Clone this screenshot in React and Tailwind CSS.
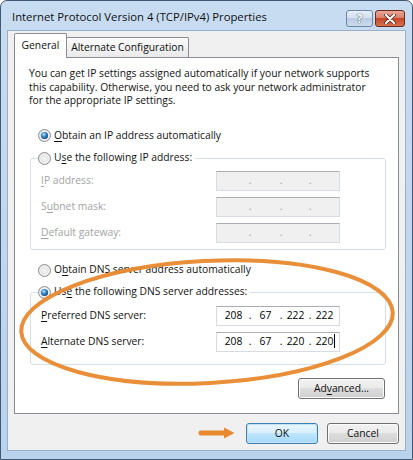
import React from "react";

function Radio({ checked }) {
  return (
    <svg width="13" height="13" viewBox="0 0 13 13" className="shrink-0">
      <defs>
        <radialGradient id="rbg" cx="50%" cy="50%" r="60%">
          <stop offset="0" stopColor="#f4f4f4" />
          <stop offset="0.7" stopColor="#e2e2e2" />
          <stop offset="1" stopColor="#c8c8c8" />
        </radialGradient>
        <radialGradient id="rdot" cx="40%" cy="35%" r="70%">
          <stop offset="0" stopColor="#b9e4fb" />
          <stop offset="0.45" stopColor="#3b8bd0" />
          <stop offset="1" stopColor="#0b3f7a" />
        </radialGradient>
      </defs>
      <circle cx="6.5" cy="6.5" r="6" fill="url(#rbg)" stroke="#8c8e90" />
      <circle cx="6.5" cy="6.5" r="4.6" fill="none" stroke="#ffffff" strokeOpacity="0.6" />
      {checked && <circle cx="6.5" cy="6.5" r="3.6" fill="url(#rdot)" />}
    </svg>
  );
}

function IpField({ values, disabled, cursor }) {
  const widths = ["w-[29px]", "w-[27px]", "w-[25px]", "w-[25px]"];
  return (
    <div
      className={`w-[124px] h-[20px] flex items-center pl-[2px] border border-[#d8dbe2] border-t-[#abadb3] ${
        disabled ? "bg-[#f0f0f0] text-[#a0a0a0]" : "bg-white text-black"
      }`}
    >
      {widths.map((w, i) => (
        <React.Fragment key={i}>
          <div className={`${w} text-center relative`}>
            {values ? values[i] : ""}
            {cursor && i === 3 && (
              <span className="absolute right-[2px] top-[0px] w-[1px] h-[14px] bg-black" />
            )}
          </div>
          {i < 3 && <div className="w-[4px] text-center">.</div>}
        </React.Fragment>
      ))}
    </div>
  );
}

function Btn({ children, w, def }) {
  return (
    <div
      className={`${w} h-[21px] rounded-[3px] border flex items-center justify-center ${
        def
          ? "border-[#3c7fb1] bg-[linear-gradient(to_bottom,#eaf6fd_0%,#d9f0fc_45%,#bee6fd_50%,#a7d9f5_100%)] shadow-[inset_0_0_0_1px_#c2e4f6]"
          : "border-[#707070] bg-[linear-gradient(to_bottom,#f2f2f2_0%,#ebebeb_45%,#dddddd_50%,#cfcfcf_100%)] shadow-[inset_0_0_0_1px_#fcfcfc]"
      }`}
    >
      {children}
    </div>
  );
}

const U = ({ children }) => <span className="underline underline-offset-[2px] decoration-[1px]">{children}</span>;

export default function App() {
  return (
    <div className="relative w-[413px] h-[460px] overflow-hidden font-['Open_Sans',sans-serif] text-[10.3px] text-[#111]">
      <div className="flex flex-col w-full h-full border border-[#3f5873] rounded-t-[7px] bg-[linear-gradient(to_bottom,#c8dcf1,#bad2ec)]">
        {/* Title bar */}
        <div className="h-[29px] shrink-0 flex items-start pl-[11px] pr-[7px] pt-[8px]">
          <div className="flex-1 text-[11.3px] leading-[16px] whitespace-nowrap">
            Internet Protocol Version 4 (TCP/IPv4) Properties
          </div>
          <div className="mt-[1px] flex gap-[2px]">
            <div className="w-[27px] h-[17px] rounded-[3px] border border-[#6a87a8] bg-[linear-gradient(to_bottom,#e6eef8_0%,#d3e0f0_45%,#b8cbe2_50%,#cbdcee_100%)] flex items-center justify-center text-[12px] font-bold text-white leading-none [text-shadow:0_0_1px_#3a4a60,0_0_1px_#3a4a60]">
              ?
            </div>
            <div className="w-[30px] h-[17px] rounded-[3px] border border-[#6b2a20] bg-[linear-gradient(to_bottom,#eaa898_0%,#db806a_45%,#c4462b_50%,#d5744f_100%)] flex items-center justify-center">
              <svg width="12" height="10" viewBox="0 0 12 10">
                <path d="M2 1 L10 9 M10 1 L2 9" stroke="#5a1a10" strokeWidth="3.6" strokeLinecap="round" />
                <path d="M2 1 L10 9 M10 1 L2 9" stroke="#ffffff" strokeWidth="2.2" strokeLinecap="round" />
              </svg>
            </div>
          </div>
        </div>

        {/* Client area */}
        <div className="mx-[6px] h-[421px] shrink-0 border border-[#98afc8] bg-[#f0f0f0] pl-[6px] pr-[6px] pt-[2px] flex flex-col">
          {/* Tabs */}
          <div className="h-[24px] flex items-end shrink-0">
            <div className="relative z-10 w-[53px] h-[25px] -mb-[1px] border border-b-0 border-[#898c95] bg-white flex items-center justify-center rounded-t-[2px]">
              General
            </div>
            <div className="w-[122px] h-[20px] border border-l-0 border-b-0 border-[#898c95] bg-[linear-gradient(to_bottom,#fbfbfb,#e9e9e9)] flex items-center justify-center rounded-tr-[2px]">
              Alternate Configuration
            </div>
          </div>

          {/* Panel */}
          <div className="h-[357px] shrink-0 border border-[#898c95] bg-white flex flex-col">
            <div className="pl-[14px] pt-[9px] leading-[13.5px] whitespace-nowrap">
              <div>You can get IP settings assigned automatically if your network supports</div>
              <div>this capability. Otherwise, you need to ask your network administrator</div>
              <div>for the appropriate IP settings.</div>
            </div>

            <div className="mt-[20px] ml-[23px] h-[16px] flex items-center gap-[3px]">
              <Radio checked />
              <span><U>O</U>btain an IP address automatically</span>
            </div>

            <div className="mt-[14.5px] ml-[15px] w-[356px] border border-[#d5dfe5] rounded-[3px] pb-[6px]">
              <div className="-mt-[9px] ml-[7px] w-fit pr-[3px] h-[16px] flex items-center gap-[3px] bg-white">
                <Radio />
                <span>U<U>s</U>e the following IP address:</span>
              </div>
              <div className="mt-[5px] flex flex-col gap-[6px] text-[#a3a3a3]">
                <div className="flex items-center">
                  <div className="pl-[10px] w-[185px]"><U>I</U>P address:</div>
                  <IpField disabled />
                </div>
                <div className="flex items-center">
                  <div className="pl-[10px] w-[185px]">S<U>u</U>bnet mask:</div>
                  <IpField disabled />
                </div>
                <div className="flex items-center">
                  <div className="pl-[10px] w-[185px]"><U>D</U>efault gateway:</div>
                  <IpField disabled />
                </div>
              </div>
            </div>

            <div className="mt-[12px] ml-[23px] h-[16px] flex items-center gap-[3px]">
              <Radio />
              <span>O<U>b</U>tain DNS server address automatically</span>
            </div>

            <div className="mt-[14px] ml-[15px] w-[356px] border border-[#d5dfe5] rounded-[3px] pb-[12px]">
              <div className="-mt-[9px] ml-[7px] w-fit pr-[3px] h-[16px] flex items-center gap-[3px] bg-white">
                <Radio checked />
                <span>Us<U>e</U> the following DNS server addresses:</span>
              </div>
              <div className="mt-[6px] flex flex-col gap-[6px]">
                <div className="flex items-center">
                  <div className="pl-[10px] w-[185px]"><U>P</U>referred DNS server:</div>
                  <IpField values={["208", "67", "222", "222"]} />
                </div>
                <div className="flex items-center">
                  <div className="pl-[10px] w-[185px]"><U>A</U>lternate DNS server:</div>
                  <IpField values={["208", "67", "220", "220"]} cursor />
                </div>
              </div>
            </div>

            <div className="mt-[13px] pr-[13px] flex justify-end">
              <Btn w="w-[87px]">Ad<U>v</U>anced...</Btn>
            </div>
          </div>

          {/* Bottom buttons */}
          <div className="mt-[9px] flex justify-end gap-[9px]">
            <Btn w="w-[72px]" def>OK</Btn>
            <Btn w="w-[72px]">Cancel</Btn>
          </div>
        </div>
      </div>

      {/* Orange annotation overlay */}
      <svg
        className="absolute inset-0 pointer-events-none"
        width="413"
        height="460"
        viewBox="0 0 413 460"
      >
        <ellipse
          cx="207"
          cy="322"
          rx="186"
          ry="61"
          transform="rotate(-3 207 322)"
          fill="none"
          stroke="#e8892f"
          strokeWidth="4"
          strokeOpacity="0.95"
        />
        <path d="M201 433 L226 433" stroke="#e8892f" strokeWidth="5" strokeLinecap="round" />
        <path d="M224 427.5 L234.5 433 L224 438.5 Z" fill="#e8892f" />
      </svg>
    </div>
  );
}
